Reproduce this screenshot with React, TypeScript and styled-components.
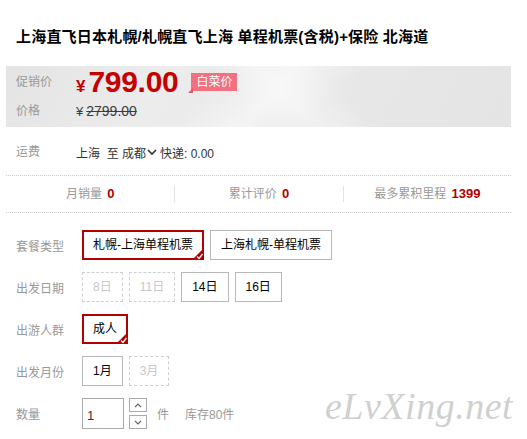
import React from 'react';
import styled, { createGlobalStyle } from 'styled-components';

const GlobalStyle = createGlobalStyle`
  html, body {
    margin: 0;
    padding: 0;
    background: #fff;
  }
  body {
    font-family: "Liberation Sans", "Noto Sans CJK SC", sans-serif;
    font-size: 12px;
    color: #333;
  }
`;

interface SkuOption {
  text: string;
  state?: 'selected' | 'disabled' | 'normal';
}

const skuRows: { label: string; options: SkuOption[] }[] = [
  {
    label: '套餐类型',
    options: [
      { text: '札幌-上海单程机票', state: 'selected' },
      { text: '上海札幌-单程机票' },
    ],
  },
  {
    label: '出发日期',
    options: [
      { text: '8日', state: 'disabled' },
      { text: '11日', state: 'disabled' },
      { text: '14日' },
      { text: '16日' },
    ],
  },
  {
    label: '出游人群',
    options: [{ text: '成人', state: 'selected' }],
  },
  {
    label: '出发月份',
    options: [
      { text: '1月' },
      { text: '3月', state: 'disabled' },
    ],
  },
];

const App: React.FC = () => {
  return (
    <Page>
      <GlobalStyle />
      <Title>上海直飞日本札幌/札幌直飞上海 单程机票(含税)+保险 北海道</Title>

      <PricePanel>
        <PromoRow>
          <Label>促销价</Label>
          <PromoPrice>
            <Yen>¥</Yen>
            <Amount>799.00</Amount>
          </PromoPrice>
          <PriceTag>白菜价</PriceTag>
        </PromoRow>
        <OrigRow>
          <Label>价格</Label>
          <OrigYen>¥</OrigYen>
          <OrigAmount>2799.00</OrigAmount>
        </OrigRow>
      </PricePanel>

      <ShipRow>
        <Label>运费</Label>
        <ShipValue>
          上海&nbsp;&nbsp;至&nbsp;成都
          <Chevron viewBox="0 0 10 8" width="10" height="8">
            <path d="M1 2 L5 6 L9 2" fill="none" stroke="#333" strokeWidth="1.6" />
          </Chevron>
          快递: 0.00
        </ShipValue>
      </ShipRow>

      <StatsBar>
        <StatCell>
          月销量 <StatNum>0</StatNum>
        </StatCell>
        <StatCell bordered>
          累计评价 <StatNum>0</StatNum>
        </StatCell>
        <StatCell bordered>
          最多累积里程 <StatNum>1399</StatNum>
        </StatCell>
      </StatsBar>

      <SkuArea>
        {skuRows.map((row) => (
          <SkuRow key={row.label}>
            <SkuLabel>{row.label}</SkuLabel>
            <Options>
              {row.options.map((opt) => (
                <Option key={opt.text} state={opt.state || 'normal'}>
                  {opt.text}
                  {opt.state === 'selected' && (
                    <Tick viewBox="0 0 12 12" width="12" height="12">
                      <path d="M12 0 L12 12 L0 12 Z" fill="#b10000" />
                      <path d="M5 8.5 L7 10.5 L10.5 6" fill="none" stroke="#fff" strokeWidth="1.3" />
                    </Tick>
                  )}
                </Option>
              ))}
            </Options>
          </SkuRow>
        ))}

        <QtyRow>
          <SkuLabel>数量</SkuLabel>
          <QtyInput>1</QtyInput>
          <Spinner>
            <SpinBtn>
              <svg viewBox="0 0 8 5" width="8" height="5">
                <path d="M1 4 L4 1 L7 4" fill="none" stroke="#666" strokeWidth="1.2" />
              </svg>
            </SpinBtn>
            <SpinBtn>
              <svg viewBox="0 0 8 5" width="8" height="5">
                <path d="M1 1 L4 4 L7 1" fill="none" stroke="#666" strokeWidth="1.2" />
              </svg>
            </SpinBtn>
          </Spinner>
          <Unit>件</Unit>
          <Stock>库存80件</Stock>
        </QtyRow>
      </SkuArea>

      <Watermark>eLvXing.net</Watermark>
    </Page>
  );
};

const Page = styled.div`
  position: relative;
  width: 527px;
  height: 439px;
  box-sizing: border-box;
  padding: 0 16px 0 6px;
  overflow: hidden;
`;

const Title = styled.h1`
  margin: 0 0 14px;
  padding: 22px 10px 0;
  font-size: 15px;
  line-height: 30px;
  font-weight: bold;
  color: #000;
  white-space: nowrap;
  letter-spacing: 0.2px;
`;

const PricePanel = styled.div`
  padding: 0 10px 3px;
  background:
    linear-gradient(135deg, rgba(255, 255, 255, 0) 40%, rgba(255, 255, 255, 0.5) 52%, rgba(255, 255, 255, 0) 64%),
    linear-gradient(45deg, rgba(255, 255, 255, 0) 46%, rgba(255, 255, 255, 0.4) 55%, rgba(255, 255, 255, 0) 66%),
    linear-gradient(120deg, #e4e4e4 0%, #ececec 30%, #e7e7e7 70%, #e4e4e4 100%);
`;

const Label = styled.div`
  width: 60px;
  flex-shrink: 0;
  color: #999;
  font-size: 12px;
  line-height: 18px;
`;

const PromoRow = styled.div`
  display: flex;
  align-items: center;
  height: 32px;
`;

const PromoPrice = styled.div`
  display: flex;
  align-items: baseline;
  color: #c40000;
`;

const Yen = styled.span`
  font-size: 17px;
  font-weight: bold;
  margin-right: 3px;
`;

const Amount = styled.span`
  font-size: 30px;
  font-weight: bold;
  line-height: 32px;
  letter-spacing: -0.3px;
`;

const PriceTag = styled.span`
  position: relative;
  margin: -1px 0 0 13px;
  padding: 0 5px;
  height: 18px;
  line-height: 18px;
  background: #f2707f;
  color: #fff;
  font-size: 12px;

  &::before {
    content: '';
    position: absolute;
    left: -3px;
    bottom: -2px;
    width: 0;
    height: 0;
    border-top: 5px solid transparent;
    border-right: 5px solid #e25a6b;
  }
`;

const OrigRow = styled.div`
  display: flex;
  align-items: center;
  height: 26px;
`;

const OrigYen = styled.span`
  font-size: 13px;
  color: #3c3c3c;
  margin-right: 3px;
`;

const OrigAmount = styled.span`
  font-size: 14px;
  color: #3c3c3c;
  text-decoration: line-through;
`;

const ShipRow = styled.div`
  display: flex;
  align-items: center;
  height: 26px;
  margin: 12px 0 10px;
  padding: 0 10px;
`;

const ShipValue = styled.div`
  display: flex;
  align-items: center;
  color: #333;
  font-size: 12px;
  white-space: pre;
`;

const Chevron = styled.svg`
  margin: 0 3px 0 1px;
`;

const StatsBar = styled.div`
  display: grid;
  grid-template-columns: 1fr 1fr 1fr;
  align-items: center;
  height: 36px;
  border-top: 1px dotted #c8c8c8;
  border-bottom: 1px dotted #c8c8c8;
`;

const StatCell = styled.div<{ bordered?: boolean }>`
  text-align: center;
  color: #999;
  font-size: 12px;
  line-height: 16px;
  border-left: ${(p) => (p.bordered ? '1px solid #e3e3e3' : 'none')};
`;

const StatNum = styled.span`
  color: #b00000;
  font-weight: bold;
  font-size: 13px;
  margin-left: 2px;
`;

const SkuArea = styled.div`
  padding: 17px 10px 0;
`;

const SkuRow = styled.div`
  display: flex;
  align-items: center;
  margin-bottom: 12px;
`;

const SkuLabel = styled.div`
  width: 66px;
  flex-shrink: 0;
  color: #999;
  font-size: 12px;
`;

const Options = styled.div`
  display: flex;
  gap: 6px;
`;

const Option = styled.div<{ state: 'selected' | 'disabled' | 'normal' }>`
  position: relative;
  box-sizing: border-box;
  height: 30px;
  padding: 0 ${(p) => (p.state === 'selected' ? '9px' : '10px')};
  font-size: 12px;
  white-space: nowrap;
  color: ${(p) => (p.state === 'disabled' ? '#c8c8c8' : '#000')};
  border: ${(p) =>
    p.state === 'selected'
      ? '2px solid #b10000'
      : p.state === 'disabled'
      ? '1px dashed #cfcfcf'
      : '1px solid #b8b8b8'};
  line-height: ${(p) => (p.state === 'selected' ? '26px' : '28px')};
`;

const Tick = styled.svg`
  position: absolute;
  right: -2px;
  bottom: -2px;
`;

const QtyRow = styled.div`
  display: flex;
  align-items: center;
`;

const QtyInput = styled.div`
  box-sizing: border-box;
  width: 42px;
  height: 31px;
  border: 1px solid #aaa;
  padding: 8px 0 0 4px;
  font-size: 13px;
  line-height: 18px;
  color: #333;
`;

const Spinner = styled.div`
  display: flex;
  flex-direction: column;
  gap: 3px;
  margin-left: 5px;
`;

const SpinBtn = styled.div`
  box-sizing: border-box;
  width: 18px;
  height: 14px;
  border: 1px solid #aaa;
  display: flex;
  align-items: center;
  justify-content: center;
`;

const Unit = styled.span`
  margin-left: 10px;
  color: #999;
  font-size: 12px;
`;

const Stock = styled.span`
  margin-left: 16px;
  color: #999;
  font-size: 12px;
`;

const Watermark = styled.div`
  position: absolute;
  left: 325px;
  top: 382px;
  font-family: "Liberation Serif", serif;
  font-style: italic;
  font-size: 38px;
  line-height: 48px;
  color: #d0d0d0;
  letter-spacing: 0.5px;
`;

export default App;
